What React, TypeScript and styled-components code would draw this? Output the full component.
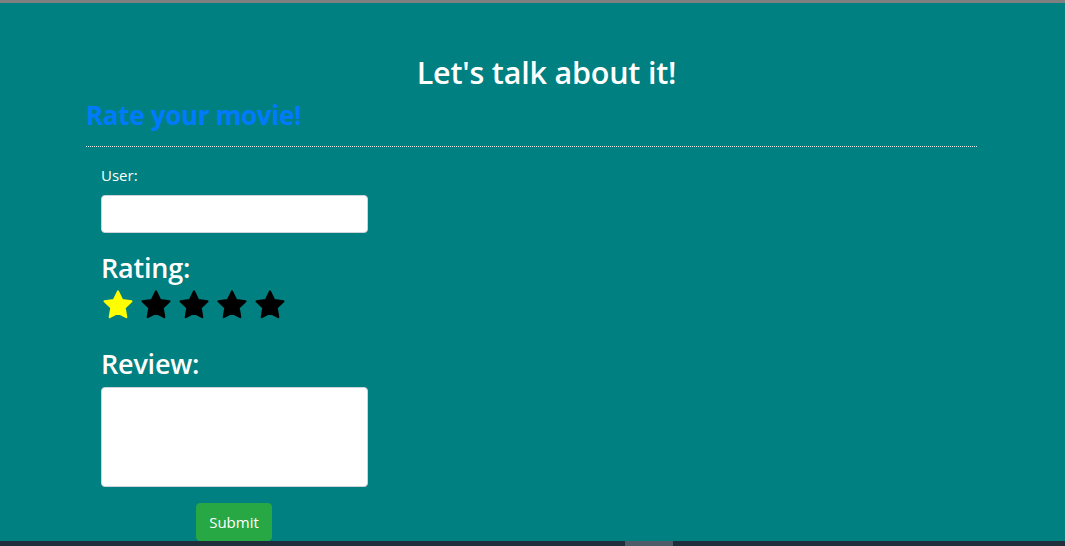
import React from "react";
import styled, { createGlobalStyle } from "styled-components";

const Global = createGlobalStyle`
  html, body { margin: 0; padding: 0; }
  body {
    background: #008080;
    font-family: "Open Sans", "Noto Sans", sans-serif;
    color: #ffffff;
    overflow: hidden;
  }
  * { box-sizing: border-box; }
`;

const Page = styled.div`
  height: 546px;
  display: flex;
  flex-direction: column;
  border-top: 3px solid #808080;
  background: #008080;
`;

const Main = styled.main`
  flex: 1;
  min-height: 0;
  display: flex;
  flex-direction: column;
  padding: 0 88px 0 86px;
  overflow: hidden;
`;

const Title = styled.h2`
  margin: 49px 0 0 0;
  text-align: center;
  font-size: 30.5px;
  font-weight: 600;
  line-height: 40px;
  padding-left: 30px;
  letter-spacing: -0.2px;
`;

const Subtitle = styled.h3`
  margin: 7px 0 0 0;
  color: #007bff;
  font-size: 26px;
  font-weight: 700;
  line-height: 32px;
  letter-spacing: -0.3px;
`;

const Rule = styled.hr`
  margin: 15px 0 0 0;
  border: 0;
  border-top: 1px dotted #e6e6e6;
  height: 0;
`;

const Form = styled.form`
  display: flex;
  flex-direction: column;
  align-items: flex-start;
  padding: 18px 0 0 15px;
`;

const SmallLabel = styled.label`
  font-size: 15px;
  line-height: 20px;
  margin-bottom: 10px;
`;

const TextInput = styled.input`
  width: 267px;
  height: 38px;
  border: 1px solid #ced4da;
  border-radius: 4px;
  background: #fff;
`;

const BigLabel = styled.label<{ $top: number }>`
  font-size: 27px;
  font-weight: 600;
  line-height: 38px;
  margin-top: ${(p) => p.$top}px;
  letter-spacing: -0.2px;
`;

const Stars = styled.div`
  display: flex;
  gap: 4px;
  margin-top: 2px;
`;

const ReviewArea = styled.textarea`
  width: 267px;
  height: 100px;
  margin-top: 4px;
  border: 1px solid #ced4da;
  border-radius: 4px;
  background: #fff;
  resize: none;
`;

const SubmitButton = styled.button`
  margin: 16px 0 0 95px;
  width: 76px;
  height: 38px;
  flex-shrink: 0;
  background: #28a745;
  border: 1px solid #28a745;
  border-radius: 4px;
  color: #fff;
  font-family: "Open Sans", "Noto Sans", sans-serif;
  font-size: 15px;
  line-height: 20px;
  padding: 0;
`;

const BottomBar = styled.div`
  height: 5px;
  flex-shrink: 0;
  background: #202d3a;
  display: flex;
  padding-left: 625px;
`;

const Thumb = styled.div`
  width: 48px;
  background: #4f5b66;
`;

const Star: React.FC<{ filled: boolean }> = ({ filled }) => (
  <svg width="34" height="32" viewBox="0 0 24 24">
    <path
      d="M12 1.8l3.1 6.4 7 1-5.1 4.9 1.2 7-6.2-3.3-6.2 3.3 1.2-7L1.9 9.2l7-1z"
      fill={filled ? "#ffff00" : "#000"}
      stroke={filled ? "#ffff00" : "#000"}
      strokeWidth="1.6"
      strokeLinejoin="round"
    />
  </svg>
);

export default function App() {
  return (
    <>
      <Global />
      <Page>
        <Main>
          <Title>Let's talk about it!</Title>
          <Subtitle>Rate your movie!</Subtitle>
          <Rule />
          <Form onSubmit={(e) => e.preventDefault()}>
            <SmallLabel>User:</SmallLabel>
            <TextInput type="text" />
            <BigLabel $top={16}>Rating:</BigLabel>
            <Stars>
              {[0, 1, 2, 3, 4].map((i) => (
                <Star key={i} filled={i === 0} />
              ))}
            </Stars>
            <BigLabel $top={24}>Review:</BigLabel>
            <ReviewArea />
            <SubmitButton type="submit">Submit</SubmitButton>
          </Form>
        </Main>
        <BottomBar>
          <Thumb />
        </BottomBar>
      </Page>
    </>
  );
}
